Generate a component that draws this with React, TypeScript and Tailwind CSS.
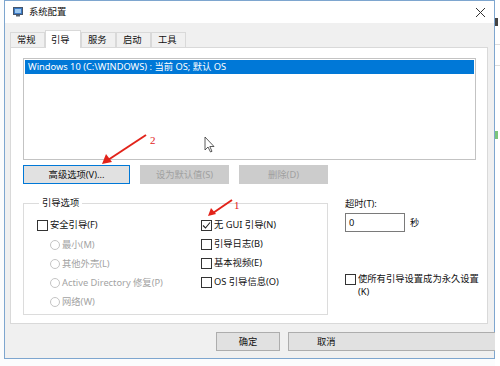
import type { ReactNode } from "react";

const font = "font-['Segoe_UI','Noto_Sans','Noto_Sans_CJK_SC',sans-serif]";

function Check({ checked, label, sub }: { checked?: boolean; label: string; sub?: string }) {
    return (
        <div className="flex h-[19px] items-start gap-[2px] pt-[4px]">
            <span className="flex h-[11px] w-[11px] shrink-0 items-center justify-center border border-[#333] bg-white">
                {checked ? (
                    <svg width="9" height="9" viewBox="0 0 9 9">
                        <path d="M1 4.5 L3.5 7 L8 1.5" fill="none" stroke="#222" strokeWidth="1.1" />
                    </svg>
                ) : null}
            </span>
            <span className="-mt-[2px] whitespace-nowrap leading-[13px]">
                {label}
                {sub ? <><br />{sub}</> : null}
            </span>
        </div>
    );
}

function Radio({ label }: { label: string }) {
    return (
        <div className="flex h-[19px] items-center gap-[2px] pl-[13px] text-[#a3a3a3]">
            <span className="h-[10px] w-[10px] rounded-full border border-[#c4c4c4] bg-white" />
            <span>{label}</span>
        </div>
    );
}

function Btn({ children, w, disabled, focus }: { children: ReactNode; w: string; disabled?: boolean; focus?: boolean }) {
    return (
        <div
            className={`flex h-[19px] shrink-0 items-center justify-center border ${w} ${
                disabled
                    ? "border-[#cccccc] bg-[#cccccc] text-[#a0a0a0]"
                    : focus
                      ? "border-[#0078d7] bg-[#e1e1e1]"
                      : "border-[#adadad] bg-[#e1e1e1]"
            }`}
        >
            {children}
        </div>
    );
}

export default function App() {
    const tabs = ["常规", "引导", "服务", "启动", "工具"];

    return (
        <div className={`relative flex h-[366px] w-[500px] overflow-hidden bg-[#fbfcfd] text-[9.3px] text-[#111] ${font}`}>
            {/* dialog window */}
            <div className="ml-[4px] flex h-[359px] w-[491px] shrink-0 flex-col border border-[#7ea6cf] bg-[#f0f0f0]">
                {/* title bar */}
                <div className="flex h-[22px] items-center bg-white pl-[8px] pr-[6px]">
                    <svg width="10" height="10" viewBox="0 0 10 10" className="mr-[6px]">
                        <rect x="0.5" y="0.5" width="9" height="7" fill="#3a78c4" stroke="#46556a" />
                        <rect x="2" y="2" width="6" height="4" fill="#9cc8f0" />
                        <rect x="3" y="8" width="4" height="1.5" fill="#58606b" />
                    </svg>
                    <span>系统配置</span>
                    <svg width="11" height="11" viewBox="0 0 11 11" className="ml-auto mr-[2px]">
                        <path d="M1 1 L10 10 M10 1 L1 10" stroke="#333" strokeWidth="1" />
                    </svg>
                </div>

                {/* tabs */}
                <div className="mt-[8px] flex h-[16px] items-end pl-[5px]">
                    {tabs.map((t, i) =>
                        i === 1 ? (
                            <div key={t} className="relative z-10 -mb-px flex h-[18px] w-[36px] items-start border border-b-0 border-[#d9d9d9] bg-white pl-[5px] pt-[2px]">
                                {t}
                            </div>
                        ) : (
                            <div key={t} className="flex h-[15px] w-[35px] items-center border border-b-0 border-[#d9d9d9] bg-[#f0f0f0] pl-[6px]">
                                {t}
                            </div>
                        ),
                    )}
                </div>

                {/* tab panel */}
                <div className="ml-[5px] mr-[6px] flex h-[277px] border border-[#d9d9d9] bg-white pl-[12px] pt-[10px]">
                    <div className="flex w-[453px] flex-col">
                        <div className="h-[102px] border border-[#c3c3c3] bg-white p-px">
                            <div className="flex h-[14px] items-center bg-[#0078d7] pl-[3px] text-white">
                                Windows 10 (C:\WINDOWS) : 当前 OS; 默认 OS
                            </div>
                        </div>

                        <div className="mt-[5px] flex gap-[10px]">
                            <Btn w="w-[107px]" focus>高级选项(V)...</Btn>
                            <Btn w="w-[89px]" disabled>设为默认值(S)</Btn>
                            <Btn w="w-[89px]" disabled>删除(D)</Btn>
                        </div>

                        <div className="mt-[13px] flex">
                            <fieldset className="w-[305px] shrink-0 border border-[#dcdcdc] px-[13px] pb-[3px]">
                                <legend className="ml-[2px] px-[3px] leading-[12px]">引导选项</legend>
                                <div className="flex pt-[7px]">
                                    <div className="flex w-[164px] flex-col">
                                        <Check label="安全引导(F)" />
                                        <Radio label="最小(M)" />
                                        <Radio label="其他外壳(L)" />
                                        <Radio label="Active Directory 修复(P)" />
                                        <Radio label="网络(W)" />
                                    </div>
                                    <div className="flex flex-col">
                                        <Check checked label="无 GUI 引导(N)" />
                                        <Check label="引导日志(B)" />
                                        <Check label="基本视频(E)" />
                                        <Check label="OS 引导信息(O)" />
                                    </div>
                                </div>
                            </fieldset>

                            <div className="ml-[17px] flex flex-col pt-[1px]">
                                <div className="leading-[12px]">超时(T):</div>
                                <div className="mt-[3px] flex items-center">
                                    <div className="flex h-[19px] w-[60px] items-center border border-[#7a7a7a] bg-white pl-[3px]">0</div>
                                    <span className="ml-[5px]">秒</span>
                                </div>
                                <div className="mt-[38px]">
                                    <Check label="使所有引导设置成为永久设置" sub="(K)" />
                                </div>
                            </div>
                        </div>
                    </div>
                </div>

                {/* dialog buttons */}
                <div className="mt-[8px] flex gap-[8px] pl-[211px]">
                    <Btn w="w-[64px]">确定</Btn>
                    <div className="flex h-[19px] w-[215px] shrink-0 items-center border border-[#adadad] bg-[#e1e1e1] pl-[28px]">取消</div>
                </div>
            </div>

            {/* window behind, at the right edge */}
            <div className="flex w-[5px] flex-col bg-white">
                <div className="mt-[18px] h-[8px] w-[3px] bg-[#444]" />
                <div className="mt-[18px] h-px w-full bg-[#ddd]" />
                <div className="mt-[20px] h-px w-full bg-[#ddd]" />
                <div className="mt-[65px] h-[8px] w-[3px] bg-[#7bc47b]" />
            </div>

            {/* annotation arrows and cursor */}
            <svg className="pointer-events-none absolute inset-0" width="500" height="366" viewBox="0 0 500 366">
                <line x1="146" y1="135" x2="108" y2="160" stroke="#e2231a" strokeWidth="2" />
                <path d="M102 164 L106 154 L112 162 Z" fill="#e2231a" />
                <text x="150" y="144" fill="#e2231a" fontSize="11" fontFamily="Liberation Serif, serif">2</text>
                <line x1="232" y1="200" x2="213" y2="213" stroke="#e2231a" strokeWidth="2" />
                <path d="M208 216 L211 208 L216 214 Z" fill="#e2231a" />
                <text x="234" y="209" fill="#e2231a" fontSize="11" fontFamily="Liberation Serif, serif">1</text>
                <path d="M205 137 L205 150 L208 147 L210.5 152 L212 151.3 L209.8 146.5 L214 146.5 Z" fill="#fff" stroke="#333" strokeWidth="0.8" strokeLinejoin="round" />
            </svg>
        </div>
    );
}
